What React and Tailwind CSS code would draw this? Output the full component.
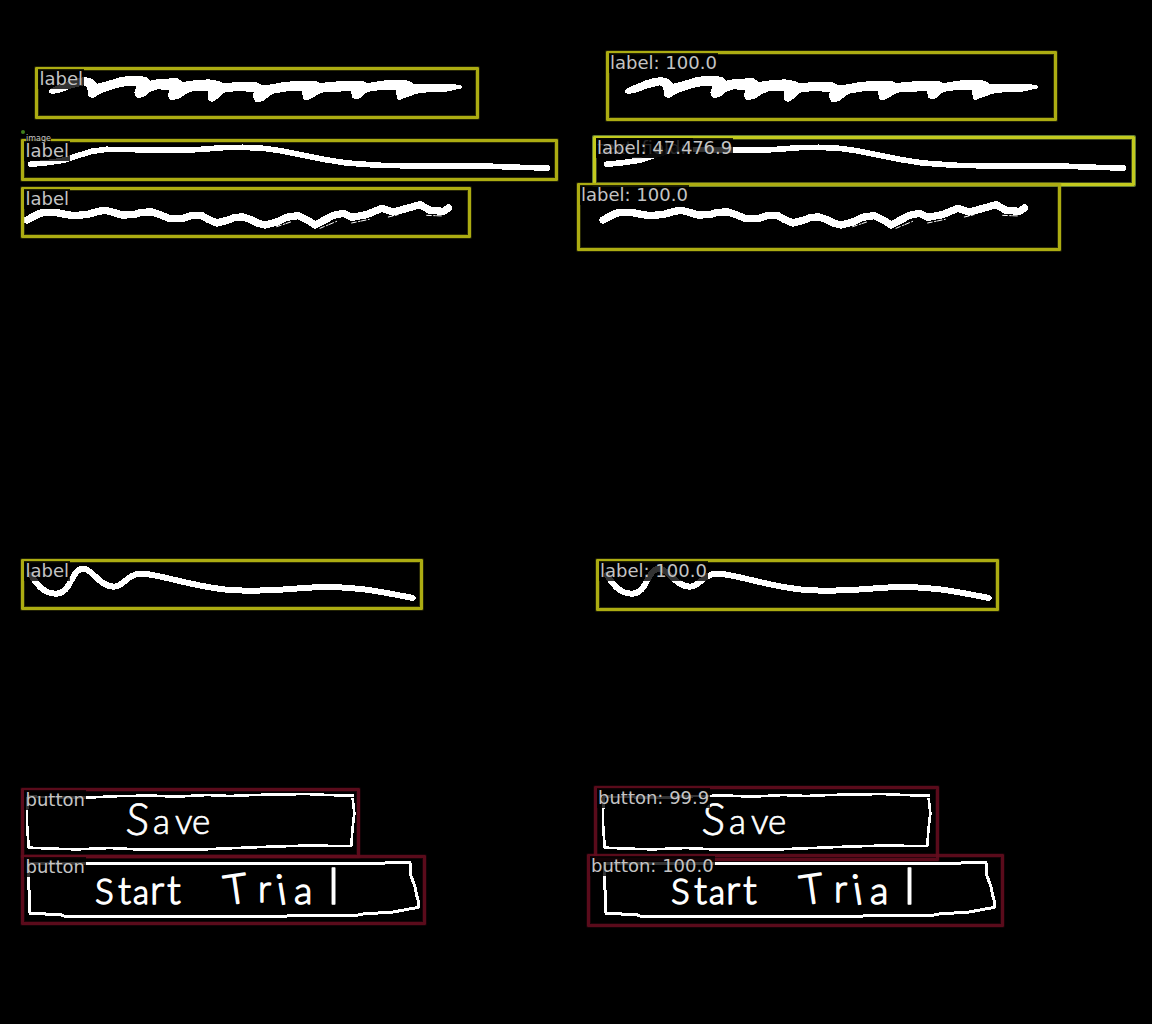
const tones = {
  yellow: "border-[#acac12] shadow-[0_0_0_1px_rgba(172,172,18,0.2),inset_0_0_0_1px_rgba(172,172,18,0.25)]",
  bright: "border-[#c2ca1e] shadow-[0_0_0_1px_rgba(130,165,70,0.75),inset_0_0_0_1px_rgba(130,150,60,0.5)]",
  maroon: "border-[#640c1e]/90 shadow-[0_0_0_1px_rgba(100,12,30,0.2),inset_0_0_0_1px_rgba(100,12,30,0.25)]",
};

const truth = [
  { x: 35, y: 67, w: 444, h: 52, tone: "yellow", text: "label" },
  { x: 21, y: 139, w: 537, h: 42, tone: "yellow", text: "label" },
  { x: 21, y: 187, w: 450, h: 51, tone: "yellow", text: "label" },
  { x: 21, y: 559, w: 402, h: 51, tone: "yellow", text: "label" },
  { x: 21, y: 788, w: 339, h: 70, tone: "maroon", text: "button" },
  { x: 21, y: 855, w: 405, h: 70, tone: "maroon", text: "button" },
];

const predicted = [
  { x: 30, y: 51, w: 451, h: 70, tone: "yellow", text: "label: 100.0" },
  { x: 17, y: 136, w: 542, h: 50, tone: "bright", text: "label: 47.4", under: "text_field: 76.9" },
  { x: 1, y: 183, w: 484, h: 68, tone: "yellow", text: "label: 100.0" },
  { x: 20, y: 559, w: 403, h: 52, tone: "yellow", text: "label: 100.0" },
  { x: 18, y: 786, w: 345, h: 75, tone: "maroon", text: "button: 99.9" },
  { x: 11, y: 854, w: 417, h: 73, tone: "maroon", text: "button: 100.0" },
];

const tagClass =
  "-mt-px block w-max bg-black/80 pr-px text-[18px] leading-[20px] whitespace-pre text-[#c4c4c4]";

function Detection({ box, inset }) {
  return (
    <div
      className={`absolute rounded-[1px] border-[3px] ${tones[box.tone]}`}
      style={{ left: box.x, top: box.y, width: box.w, height: box.h }}
    >
      {box.under && <span className={`${tagClass} absolute top-0 left-0 pl-px`}>{box.under}</span>}
      <span className={`${tagClass} relative ${inset ? "pl-[1.5px]" : "pl-px"}`}>{box.text}</span>
    </div>
  );
}

function Sketch() {
  return (
    <svg viewBox="0 0 576 1024" className="absolute inset-0 h-full w-full" fill="none">
      <g shapeRendering="crispEdges">
        {/* looped scribble */}
        <g fill="#fff" stroke="#fff" strokeWidth="4" strokeLinejoin="round">
          <polygon
            transform="translate(-6 40) scale(0.33333)"
            points="168,150 180,143 225,124 255,115 275,114 293,118 303,127 308,134 345,124 385,112 430,109 455,113 468,124 500,118 550,117 565,128 610,122 645,120 670,124 690,132 740,127 785,127 805,138 842,134 842,158 830,163 810,179 798,184 785,183 779,172 781,154 730,151 690,156 670,174 655,184 644,178 644,152 600,150 575,160 555,174 530,179 524,168 528,148 490,146 465,155 450,168 435,172 427,170 423,158 430,137 400,135 360,144 320,158 295,173 285,168 281,140 270,134 230,144 200,155 175,160 168,157"
          />
          <polygon
            transform="translate(274 40) scale(0.33333)"
            points="0,134 35,127 85,125 125,124 138,131 175,127 240,124 268,126 280,131 340,122 390,121 410,127 420,134 450,133 530,134 550,136 562,139 562,143 540,148 510,154 440,156 425,160 395,171 375,178 370,172 368,147 340,147 290,151 270,159 258,173 246,176 235,172 234,151 190,153 140,156 120,169 100,179 89,176 86,152 40,152 0,158"
          />
        </g>
        <g stroke="#fff" strokeLinecap="round" strokeLinejoin="round">
          {/* gentle curve */}
          <polyline
            transform="translate(10 50) scale(0.33333)"
            strokeWidth="17"
            points="62,343 110,338 165,330 200,318 245,304 290,298 370,299 470,300 560,299 640,293 700,292 760,295 810,302 870,314 940,328 1010,339 1110,346 1230,348 1350,348 1450,349 1530,352 1612,354"
          />
          {/* wavy line */}
          <polyline
            transform="translate(10 50) scale(0.33333)"
            strokeWidth="22"
            points="51,510 75,497 90,490 105,487 140,488 165,493 190,497 235,493 260,485 285,481 310,487 335,495 370,494 395,487 425,486 445,492 480,506 520,505 545,496 575,497 595,508 620,519 655,510 675,502 700,501 720,508 745,520 765,525 800,516 830,502 865,497 895,512 915,525 940,512 970,496 1000,490 1025,502 1070,494 1115,475 1150,486 1195,474 1230,464 1260,481 1300,484 1316,474"
          />
          <g transform="translate(10 50) scale(0.33333)" strokeWidth="3" strokeDasharray="14 7 5 4">
            <path d="M800 530 L845 515 M930 535 L980 514 M1025 519 L1078 508 M1135 501 L1165 494 M1250 496 L1300 498" />
          </g>
          {/* damped wave */}
          <path
            transform="translate(10 550) scale(0.33333)"
            strokeWidth="18"
            d="M62 74 C82 104 100 131 138 131 C185 131 182 56 221 56 C246 56 268 110 312 110 C345 108 350 71 395 71 C450 73 530 105 640 118 C720 127 800 121 880 114 C1010 104 1100 122 1208 144"
          />
        </g>
        {/* hand-drawn button frames */}
        <g transform="translate(10 780) scale(0.33333)" stroke="#fff" strokeWidth="8" strokeLinejoin="round">
          <polyline points="50,50 230,53 330,48 430,47 500,50 590,45 660,48 730,45 830,43 890,42 950,45 1032,47" />
          <polyline points="52,52 51,130 56,203 130,206 200,208 300,204 400,209 560,209 630,206 780,200 880,197 1024,198 1027,150 1033,100 1028,55" />
          <polyline strokeWidth="9" points="50,251 1120,251 1130,247 1200,247 1202,285 1215,320 1220,345 1227,372 1225,382 1150,396 1060,402 1035,407 840,408 630,409 165,409 152,404 60,400 57,330 55,248" />
        </g>
      </g>
      {/* button captions */}
      <g fill="#fff" fontFamily="Lato, 'Open Sans', sans-serif" fontWeight="300" stroke="#fff" strokeLinejoin="round">
        <text y="834" fontSize="35" x="125 153 175 192" strokeWidth="0.7">
          <tspan fontSize="44" rotate="4">S</tspan>ave
        </text>
        <text y="904" fontSize="38" x="95 118 133 150 167" strokeWidth="1.4">
          <tspan fontSize="35">S</tspan>t<tspan fontSize="33">a</tspan>
          <tspan fontSize="40">rt</tspan>
        </text>
        <text y="904" fontSize="37" strokeWidth="1.4">
          <tspan x="226" y="905" fontSize="41" rotate="-8">T</tspan>
          <tspan x="258" y="902">r</tspan>
          <tspan x="279" y="905" fontSize="42" rotate="-9">i</tspan>
          <tspan x="294" y="904" fontSize="38">a</tspan>
          <tspan x="328" y="904" fontSize="50">l</tspan>
        </text>
      </g>
    </svg>
  );
}

function Panel({ boxes, inset, children }) {
  return (
    <section className="relative h-[1024px] w-[576px]">
      <Sketch />
      {boxes.map((box, i) => (
        <Detection key={i} box={box} inset={inset} />
      ))}
      {children}
    </section>
  );
}

export default function App() {
  return (
    <main className="grid h-[1024px] w-[1152px] grid-cols-2 overflow-hidden bg-black font-['DejaVu_Sans',sans-serif]">
      <Panel boxes={truth} inset>
        <div className="absolute top-[130px] left-[21px] h-1 w-1 rounded-full bg-[#40801c]" />
        <span className="absolute top-[134px] left-[26px] bg-black/80 text-[8px] leading-[9px] text-[#c4c4c4]">
          image
        </span>
      </Panel>
      <Panel boxes={predicted} />
    </main>
  );
}
